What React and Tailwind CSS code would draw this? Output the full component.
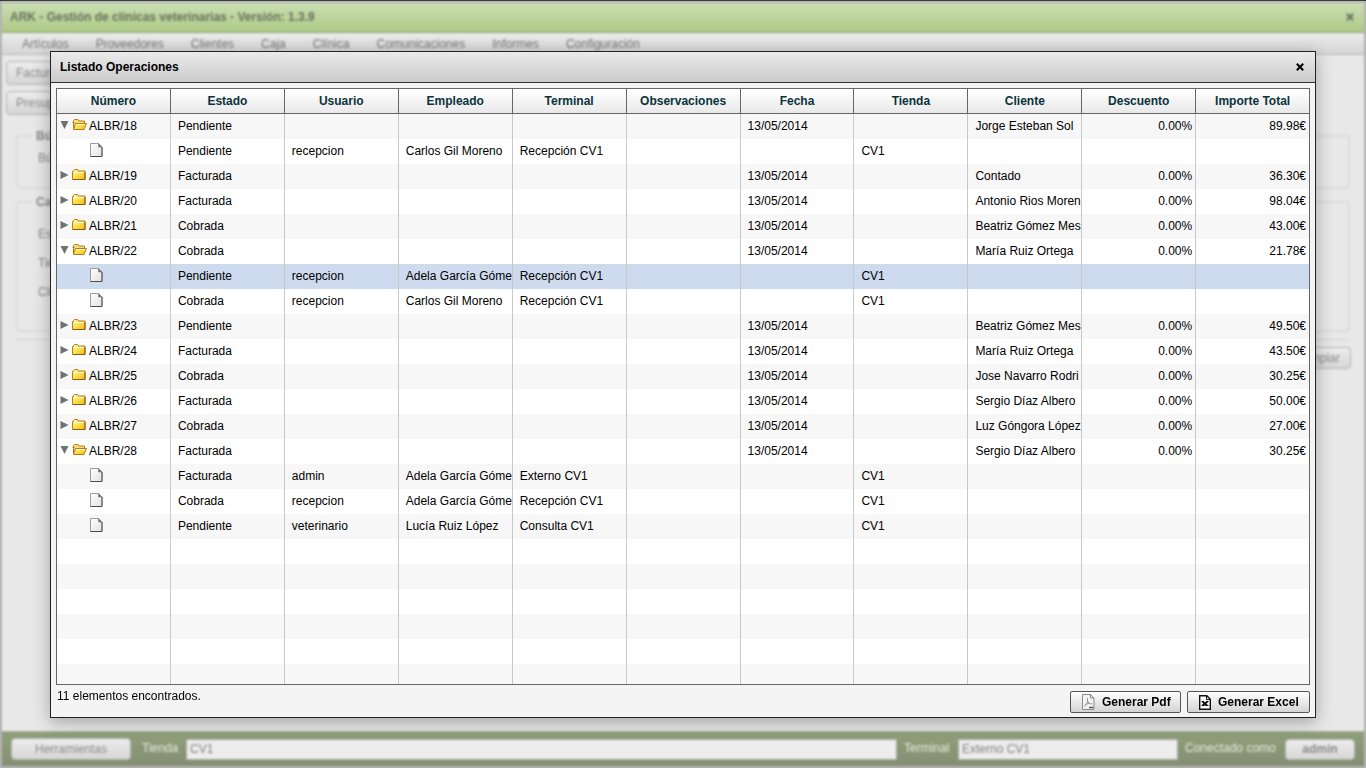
const MENU = ["Artículos", "Proveedores", "Clientes", "Caja", "Clínica", "Comunicaciones", "Informes", "Configuración"];

const COLUMNS = [
  "Número", "Estado", "Usuario", "Empleado", "Terminal", "Observaciones",
  "Fecha", "Tienda", "Cliente", "Descuento", "Importe Total",
];

const DATE = "13/05/2014";

const OPERATIONS = [
  { id: "ALBR/18", estado: "Pendiente", cliente: "Jorge Esteban Sol", total: "89.98€", open: true, lines: [
    { estado: "Pendiente", usuario: "recepcion", empleado: "Carlos Gil Moreno", terminal: "Recepción CV1" },
  ] },
  { id: "ALBR/19", estado: "Facturada", cliente: "Contado", total: "36.30€" },
  { id: "ALBR/20", estado: "Facturada", cliente: "Antonio Rios Moren", total: "98.04€" },
  { id: "ALBR/21", estado: "Cobrada", cliente: "Beatriz Gómez Mes", total: "43.00€" },
  { id: "ALBR/22", estado: "Cobrada", cliente: "María Ruiz Ortega", total: "21.78€", open: true, lines: [
    { estado: "Pendiente", usuario: "recepcion", empleado: "Adela García Góme", terminal: "Recepción CV1", selected: true },
    { estado: "Cobrada", usuario: "recepcion", empleado: "Carlos Gil Moreno", terminal: "Recepción CV1" },
  ] },
  { id: "ALBR/23", estado: "Pendiente", cliente: "Beatriz Gómez Mes", total: "49.50€" },
  { id: "ALBR/24", estado: "Facturada", cliente: "María Ruiz Ortega", total: "43.50€" },
  { id: "ALBR/25", estado: "Cobrada", cliente: "Jose Navarro Rodri", total: "30.25€" },
  { id: "ALBR/26", estado: "Facturada", cliente: "Sergio Díaz Albero", total: "50.00€" },
  { id: "ALBR/27", estado: "Cobrada", cliente: "Luz Góngora López", total: "27.00€" },
  { id: "ALBR/28", estado: "Facturada", cliente: "Sergio Díaz Albero", total: "30.25€", open: true, lines: [
    { estado: "Facturada", usuario: "admin", empleado: "Adela García Góme", terminal: "Externo CV1" },
    { estado: "Cobrada", usuario: "recepcion", empleado: "Adela García Góme", terminal: "Recepción CV1" },
    { estado: "Pendiente", usuario: "veterinario", empleado: "Lucía Ruiz López", terminal: "Consulta CV1" },
  ] },
];

// Flatten the tree, then pad it so the stripes reach the bottom of the grid
const ROWS = OPERATIONS.flatMap((op) => [op, ...(op.lines || [])]);
const EMPTY_ROWS = 6;

function CloseIcon() {
  return (
    <svg width="8" height="8" viewBox="0 0 8 8" fill="none" stroke="currentColor" strokeWidth="2">
      <path d="M0.8 0.8 7.2 7.2M7.2 0.8 0.8 7.2" />
    </svg>
  );
}

function Arrow({ open }) {
  return (
    <svg width="10" height="10" viewBox="0 0 10 10" fill="#6d7373">
      <path d={open ? "M0.500 1h8L4.500 9z" : "M0.500 1v8l8-4z"} />
    </svg>
  );
}

function Folder({ open }) {
  return (
    <svg width="15" height="13" viewBox="0 0 15 13">
      <defs>
        <linearGradient id="folder" x1="0" y1="0" x2="1" y2="1">
          <stop offset="0" stopColor="#fffbb0" />
          <stop offset="0.5" stopColor="#fde04a" />
          <stop offset="1" stopColor="#f0b81c" />
        </linearGradient>
      </defs>
      {open ? (
        <g stroke="#b57d20" strokeLinejoin="round">
          <path d="M1.5 11V2.500l1-1h3.500l1 1.500h5.500v3" fill="#f8dc7a" />
          <path d="M0.500 4.500h2M3.500 5.500h11L12 11.500H1.500z" fill="url(#folder)" />
          <path d="M4.200 6.500h8.500" stroke="#fffbd0" />
        </g>
      ) : (
        <g stroke="#b57d20" strokeLinejoin="round">
          <path d="M0.5 11.5v-8h1v-1l1-1h3l1 1.500h6.500v8.500z" fill="url(#folder)" />
          <path d="M1.5 4.5h10.500" stroke="#fffce0" />
          <path d="M1 11.5h12V4" fill="none" stroke="#8a5a12" />
        </g>
      )}
    </svg>
  );
}

function Sheet() {
  return (
    <svg width="13" height="15" viewBox="0 0 13 15">
      <defs>
        <linearGradient id="sheet" x1="0" y1="0" x2="1" y2="1">
          <stop offset="0" stopColor="#fff" />
          <stop offset="1" stopColor="#e2e2e2" />
        </linearGradient>
      </defs>
      <path d="M0.5 0.5h8l3.5 3.5v9.5H0.5z" fill="url(#sheet)" stroke="#9c9c9c" />
      <path d="M12 4v9.5H0.5" fill="none" stroke="#4c4c4c" />
      <path d="M8.5 0.5V4H12z" fill="#777" stroke="#777" strokeWidth="0.6" />
    </svg>
  );
}

function PdfIcon() {
  return (
    <svg width="13" height="16" viewBox="0 0 13 16" fill="none" stroke="#8b8b8b">
      <path d="M0.5 0.5h8l3.5 3.5v11.5H0.5z" fill="#f3f3f3" />
      <path d="M8.5 0.5V4H12" />
      <path d="M5.500 4v3c0 2-1.500 4.500-3.500 5.500M5.500 7c1 2 2.500 3 5 3M3.500 10.500l4-1.500" strokeWidth="0.9" />
      <path d="M7 13.500h4.500" stroke="#555" strokeWidth="1.5" />
    </svg>
  );
}

function ExcelIcon() {
  return (
    <svg width="12" height="15" viewBox="0 0 12 15" fill="none" stroke="#111">
      <path d="M0.7 0.7h7.1l3.5 3.5v10H0.7z" fill="#fff" strokeWidth="1.4" />
      <path d="M7.5 0.7v3.8h3.8" />
      <path d="M3.500 6.500l4.500 4M8.500 6.500l-5 4" strokeWidth="1.8" />
      <path d="M2.500 10.500h3M6.500 10.500h3M2.500 6.500h2M7 6.500h2.500" />
    </svg>
  );
}

const dimButton =
  "rounded-sm border border-[#b4b4b4] bg-linear-to-b from-[#ededed] to-[#d6d6d6] text-[#8a8a8a]";
const dimInput = "h-[21px] border border-[#aaa] bg-[#ededed] px-[3px] text-[#808080]";

function MainWindow() {
  return (
    <div className="flex flex-1 flex-col border-2 border-[#b4b4b4] bg-[#e8e8e8] blur-[1px]">
      <header className="flex h-[30px] items-center justify-between border-b border-[#8f9d7c] bg-linear-to-b from-[#cbdfb3] to-[#aec986] pr-[10px] pb-[2px] pl-2 font-bold text-[#66725a]">
        <h1>ARK - Gestión de clínicas veterinarias - Versión: 1.3.9</h1>
        <button aria-label="Cerrar aplicación"><CloseIcon /></button>
      </header>

      <nav className="flex h-[22px] items-center gap-[27px] border-b border-[#bbb] bg-linear-to-b from-[#ececec] to-[#d5d5d5] pl-5 text-[#757575]">
        {MENU.map((item) => <button key={item}>{item}</button>)}
      </nav>

      <main className="flex flex-1 flex-col text-[#888]">
        <div className="flex flex-col items-start gap-[6px] px-1 pt-[6px]">
          <button className={`${dimButton} h-6 w-24 pl-[9px] text-left`}>Facturar</button>
          <button className={`${dimButton} h-6 w-24 pl-[9px] text-left`}>Presupuesto</button>
        </div>
        <div className="flex flex-col gap-[5px] px-[14px] pt-[13px]">
          <fieldset className="h-[61px] rounded-sm border-2 border-[#dcdcdc] pl-5">
            <legend className="-ml-[6px] px-1 leading-4 font-bold">Búsqueda</legend>
            <p className="pt-[6px] leading-4">Búsqueda</p>
          </fieldset>
          <fieldset className="h-[138px] rounded-sm border-2 border-[#dcdcdc] pl-5">
            <legend className="-ml-[6px] px-1 leading-4 font-bold">Campos</legend>
            <div className="flex flex-col gap-[13px] pt-4 leading-4">
              <p>Estado</p>
              <p>Tienda</p>
              <p>Cliente</p>
            </div>
          </fieldset>
        </div>
        <hr className="mx-[14px] mt-[7px] border-[#d2d2d2]" />
        <div className="flex justify-end px-[13px] pt-[7px]">
          <button className={`${dimButton} h-[22px] px-[10px]`}>Limpiar</button>
        </div>
      </main>

      <footer className="flex h-[35px] items-center border-t border-[#a9b39b] bg-linear-to-b from-[#90a07a] to-[#848f73] px-[9px] text-[#e8ece2]">
        <button className={`${dimButton} mr-[11px] h-[22px] w-[120px]`}>Herramientas</button>
        <label htmlFor="tienda" className="w-11 pb-[3px]">Tienda</label>
        <input id="tienda" defaultValue="CV1" className={`${dimInput} min-w-0 flex-1`} />
        <label htmlFor="terminal" className="w-[61px] pb-[3px] pl-[7px]">Terminal</label>
        <input id="terminal" defaultValue="Externo CV1" className={`${dimInput} w-[220px]`} />
        <span className="w-[107px] pb-[3px] pl-[7px]">Conectado como</span>
        <button className={`${dimButton} h-[21px] w-[70px] font-bold`}>admin</button>
      </footer>
    </div>
  );
}

function Row({ row }) {
  const cell = "overflow-hidden border-r border-[#c8c8c8] pb-[2px] pl-[7px] last:border-r-0";
  const color = row.selected ? "bg-[#cedbef]" : "odd:bg-[#f7f7f7] even:bg-white";
  return (
    <tr className={`h-[25px] ${color}`}>
      <td className="border-r border-[#c8c8c8] pl-[3px]">
        {row.id && (
          <div className="flex items-center pb-[2px]">
            <span className="pb-[2px]"><Arrow open={row.open} /></span>
            <span className="mx-[2px] pb-[2px]"><Folder open={row.open} /></span>
            {row.id}
          </div>
        )}
        {row.usuario && <div className="pb-[3px] pl-[30px]"><Sheet /></div>}
      </td>
      <td className={cell}>{row.estado}</td>
      <td className={cell}>{row.usuario}</td>
      <td className={cell}>{row.empleado}</td>
      <td className={cell}>{row.terminal}</td>
      <td className={cell}></td>
      <td className={cell}>{row.id && DATE}</td>
      <td className={cell}>{row.usuario && "CV1"}</td>
      <td className={cell}>{row.cliente}</td>
      <td className={`${cell} pr-[3px] text-right`}>{row.id && "0.00%"}</td>
      <td className={`${cell} pr-[3px] text-right`}>{row.total}</td>
    </tr>
  );
}

function OperationsDialog() {
  const button =
    "flex h-[22px] items-center gap-[7px] rounded-xs border border-[#555] bg-linear-to-b from-white to-[#d4d4d4] pl-[11px] font-bold";
  return (
    <div role="dialog" aria-labelledby="dialog-title" className="fixed inset-x-[50px] top-[51px] bottom-[50px] flex flex-col border border-[#222] bg-[#f4f4f4] text-black shadow-[0_4px_16px_rgba(0,0,0,0.3)]">
      <div className="flex h-[31px] items-center justify-between border-b border-[#333] bg-linear-to-b from-[#ebebeb] to-[#cbcbcb] pr-[11px] pl-[9px]">
        <h2 id="dialog-title" className="font-bold">Listado Operaciones</h2>
        <button aria-label="Cerrar"><CloseIcon /></button>
      </div>

      <div className="mx-[5px] mt-[5px] min-h-0 flex-1 overflow-hidden border border-[#666] bg-white">
        <table className="w-full table-fixed border-separate border-spacing-0 whitespace-nowrap">
          <colgroup>
            {COLUMNS.map((name, i) => <col key={name} className={i < 10 ? "w-[9.1%]" : ""} />)}
          </colgroup>
          <thead>
            <tr className="h-[25px] bg-linear-to-b from-white to-[#e8e8e8] text-[#0b333c]">
              {COLUMNS.map((name) => (
                <th key={name} className="border-r border-b border-[#666] font-bold last:border-r-0">{name}</th>
              ))}
            </tr>
          </thead>
          <tbody>
            {ROWS.map((row, i) => <Row key={i} row={row} />)}
            {Array.from({ length: EMPTY_ROWS }, (_, i) => <Row key={`empty-${i}`} row={{}} />)}
          </tbody>
        </table>
      </div>

      <div className="flex h-8 items-start justify-between px-[5px]">
        <p className="pt-[3px] pl-px">11 elementos encontrados.</p>
        <div className="flex gap-[6px] pt-[6px]">
          <button className={`${button} w-[111px]`}><PdfIcon />Generar Pdf</button>
          <button className={`${button} w-[123px]`}><ExcelIcon />Generar Excel</button>
        </div>
      </div>
    </div>
  );
}

export default function App() {
  return (
    <div className="flex min-h-screen flex-col border-t border-black bg-[#b0b0b0] font-['Liberation_Sans',Arial,sans-serif] text-xs">
      <MainWindow />
      <OperationsDialog />
    </div>
  );
}
